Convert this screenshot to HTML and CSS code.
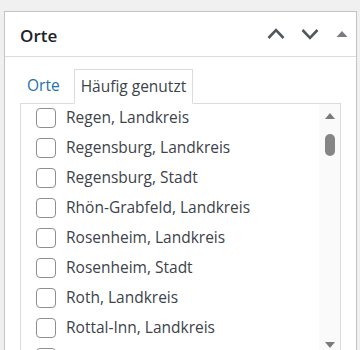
FILE: index.html
```html
<!DOCTYPE html>
<html lang="de">
<head>
    <meta charset="UTF-8">
    <meta name="viewport" content="width=device-width, initial-scale=1.0">
    <title>Orte</title>
    <link rel="stylesheet" href="styles.css">
</head>
<body>
    <div class="postbox">
        <div class="postbox-header">
            <h2 class="postbox-title">Orte</h2>
            <div class="handle-actions">
                <svg class="icon-up" width="18" height="12" viewBox="0 0 18 12"><path d="M1.5 10 L9 2.2 L16.5 10" /></svg>
                <svg class="icon-down" width="18" height="12" viewBox="0 0 18 12"><path d="M1.5 2 L9 9.8 L16.5 2" /></svg>
                <svg class="icon-toggle" width="12" height="12" viewBox="0 0 12 12"><polygon points="0.5,9 11.5,9 6,3" /></svg>
            </div>
        </div>
        <div class="inside">
            <ul class="category-tabs">
                <li class="tab"><a href="#">Orte</a></li>
                <li class="tab active">Häufig genutzt</li>
            </ul>
            <div class="tabs-panel">
                <ul class="checklist">
                    <li><span class="checkbox"></span>Regen, Landkreis</li>
                    <li><span class="checkbox"></span>Regensburg, Landkreis</li>
                    <li><span class="checkbox"></span>Regensburg, Stadt</li>
                    <li><span class="checkbox"></span>Rhön-Grabfeld, Landkreis</li>
                    <li><span class="checkbox"></span>Rosenheim, Landkreis</li>
                    <li><span class="checkbox"></span>Rosenheim, Stadt</li>
                    <li><span class="checkbox"></span>Roth, Landkreis</li>
                    <li><span class="checkbox"></span>Rottal-Inn, Landkreis</li>
                    <li><span class="checkbox"></span></li>
                </ul>
                <div class="scrollbar">
                    <svg class="arrow" width="10" height="6" viewBox="0 0 10 6"><polygon points="0,6 10,6 5,0" /></svg>
                    <div class="thumb"></div>
                    <svg class="arrow arrow-down" width="10" height="6" viewBox="0 0 10 6"><polygon points="0,0 10,0 5,6" /></svg>
                </div>
            </div>
        </div>
    </div>
</body>
</html>
```

FILE: styles.css
```css
body {
    margin: 0;
    height: 350px;
    overflow: hidden;
    background: #f0f0f1;
    font-family: 'Open Sans', 'Noto Sans', sans-serif;
    color: #3c434a;
}
.postbox {
    box-sizing: border-box;
    width: 353px;
    margin: 11px 0 0 4px;
    background: #ffffff;
    border: 1px solid #c3c4c7;
}
.postbox-header {
    display: flex;
    align-items: center;
    height: 44px;
    border-bottom: 1px solid #dcdcde;
}
.postbox-title {
    flex: 1;
    margin: 0;
    padding: 2px 0 0 15px;
    font-size: 17px;
    font-weight: 600;
    color: #1d2327;
}
.handle-actions {
    display: flex;
    align-items: center;
    gap: 16px;
    padding-right: 8px;
}
.handle-actions svg {
    display: block;
}
.icon-up path,
.icon-down path {
    fill: none;
    stroke: #50575e;
    stroke-width: 2.6;
}
.icon-toggle polygon {
    fill: #787c82;
}
.icon-toggle {
    margin-left: 1px;
}
.inside {
    padding: 11px 15px 0;
}
.category-tabs {
    display: flex;
    align-items: flex-end;
    gap: 7px;
    margin: 0;
    padding: 0;
    list-style: none;
}
.tab {
    padding: 4px 6px 5px;
    font-size: 15.5px;
    line-height: 24px;
    border: 1px solid transparent;
}
.tab a {
    color: #2271b1;
    text-decoration: none;
}
.tab.active {
    position: relative;
    margin-bottom: -1px;
    background: #ffffff;
    border-color: #dcdcde;
    border-bottom-color: #ffffff;
    color: #3c434a;
}
.tabs-panel {
    display: flex;
    height: 250px;
    border: 1px solid #dcdcde;
}
.checklist {
    flex: 1;
    margin: 0;
    padding: 0 0 0 15px;
    list-style: none;
}
.checklist li {
    display: flex;
    align-items: flex-start;
    gap: 10px;
    height: 30px;
    font-size: 15.5px;
    line-height: 26px;
}
.checkbox {
    box-sizing: border-box;
    flex: none;
    width: 20px;
    height: 20px;
    margin-top: 4px;
    border: 1px solid #8c8f94;
    border-radius: 4px;
    background: #ffffff;
}
.scrollbar {
    display: flex;
    flex-direction: column;
    align-items: center;
    width: 21px;
    padding-top: 9px;
    background: #fafafa;
}
.arrow {
    display: block;
}
.arrow polygon {
    fill: #7a7a7a;
}
.thumb {
    width: 10px;
    height: 22px;
    margin-top: 15px;
    border-radius: 5px;
    background: #858585;
}
.arrow-down {
    margin-top: auto;
    margin-bottom: 6px;
}
```
